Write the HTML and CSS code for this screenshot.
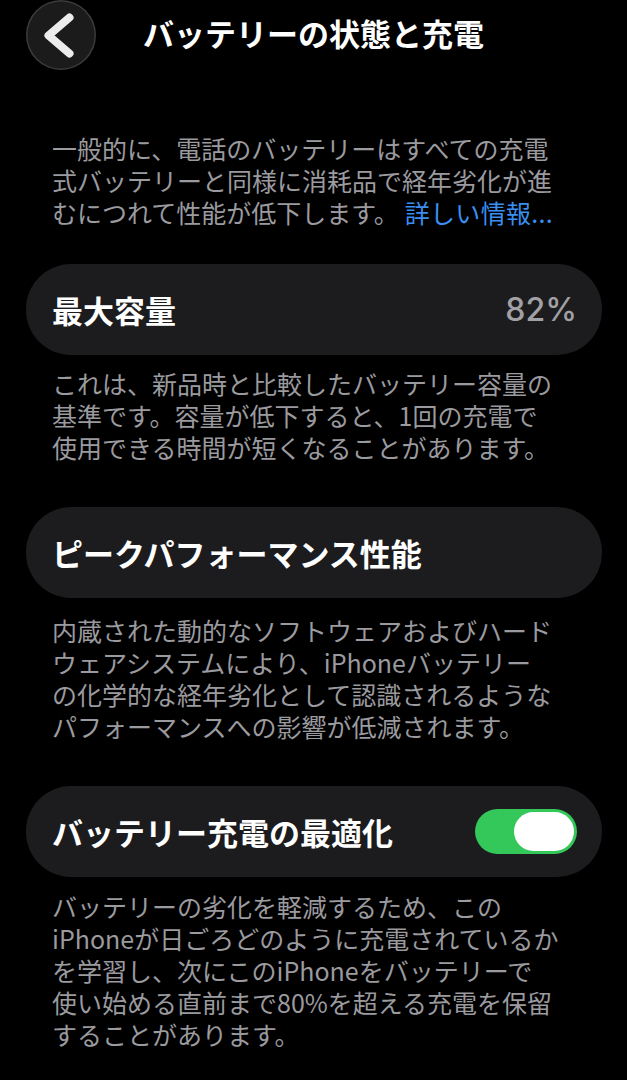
FILE: index.html
```html
<!DOCTYPE html>
<html lang="ja">
<head>
<meta charset="utf-8">
<title>バッテリーの状態と充電</title>
<link rel="stylesheet" href="styles.css">
</head>
<body>
<div class="page">
  <header class="nav">
    <div class="back">
      <svg viewBox="0 0 70 70" width="70" height="70" aria-hidden="true">
        <path d="M43.5 17.5 L22.5 35.5 L43.5 53.5" fill="none" stroke="#ececec" stroke-width="8" stroke-linecap="round" stroke-linejoin="round"/>
      </svg>
    </div>
    <h1 class="title">バッテリーの状態と充電</h1>
    <div></div>
  </header>

  <p class="note intro">一般的に、電話のバッテリーはすべての充電<br>式バッテリーと同様に消耗品で経年劣化が進<br>むにつれて性能が低下します。<a class="link" href="#">詳しい情報...</a></p>

  <div class="card card-first">
    <span class="label">最大容量</span>
    <span class="value">82%</span>
  </div>
  <p class="note note-after">これは、新品時と比較したバッテリー容量の<br>基準です。容量が低下すると、1回の充電で<br>使用できる時間が短くなることがあります。</p>

  <div class="card card-gap">
    <span class="label">ピークパフォーマンス性能</span>
  </div>
  <p class="note note-after2">内蔵された動的なソフトウェアおよびハード<br>ウェアシステムにより、iPhoneバッテリー<br>の化学的な経年劣化として認識されるような<br>パフォーマンスへの影響が低減されます。</p>

  <div class="card card-gap">
    <span class="label">バッテリー充電の最適化</span>
    <span class="toggle"><span class="knob"></span></span>
  </div>
  <p class="note note-after3">バッテリーの劣化を軽減するため、この<br>iPhoneが日ごろどのように充電されているか<br>を学習し、次にこのiPhoneをバッテリーで<br>使い始める直前まで80%を超える充電を保留<br>することがあります。</p>
</div>
</body>
</html>
```

FILE: styles.css
```css
html, body {
  margin: 0;
  padding: 0;
  background: #000;
}

body {
  font-family: "Noto Sans CJK JP", "Noto Sans", sans-serif;
  color: #fff;
  width: 627px;
  height: 1080px;
  overflow: hidden;
}

.page {
  padding: 0 25px 0 26px;
}

.nav {
  height: 70px;
  display: grid;
  grid-template-columns: 1fr auto 1fr;
  align-items: center;
  margin: 0 -25px 0 -26px;
  padding: 0 26px;
}

.back {
  width: 70px;
  height: 70px;
  border-radius: 50%;
  background: #1b1b1c;
  box-shadow: inset 0 0 0 1.5px rgba(255, 255, 255, 0.14);
  display: flex;
}

.title {
  margin: -4px 0 0;
  font-size: 31px;
  font-weight: 700;
  line-height: 70px;
  color: #fff;
  white-space: nowrap;
}

.note {
  margin: 0;
  padding-left: 26px;
  font-size: 25px;
  line-height: 32px;
  color: #9a9a9f;
  white-space: nowrap;
}

.intro {
  margin-top: 62px;
}

.link {
  color: #3a8ff0;
  text-decoration: none;
  margin-left: 6px;
  letter-spacing: 0.3px;
}

.card {
  height: 91px;
  border-radius: 45px;
  background: #1c1c1e;
  display: flex;
  align-items: center;
  justify-content: space-between;
  padding: 0 25px 0 26px;
}

.card-first {
  margin-top: 36px;
}

.card-gap {
  margin-top: 44px;
}

.note-after {
  margin-top: 12px;
}

.note-after2 {
  margin-top: 16px;
}

.note-after3 {
  margin-top: 13px;
}

.label {
  font-size: 31px;
  font-weight: 700;
  color: #fff;
  white-space: nowrap;
}

.value {
  font-family: "Inter", "Noto Sans", sans-serif;
  font-size: 32px;
  font-weight: 500;
  color: #a0a0a5;
}

.toggle {
  width: 102px;
  height: 45px;
  border-radius: 23px;
  background: #34c759;
  display: flex;
  justify-content: flex-end;
  align-items: center;
  padding: 0 3px;
  box-sizing: border-box;
}

.knob {
  width: 60px;
  height: 39px;
  border-radius: 20px;
  background: #fff;
}
```
